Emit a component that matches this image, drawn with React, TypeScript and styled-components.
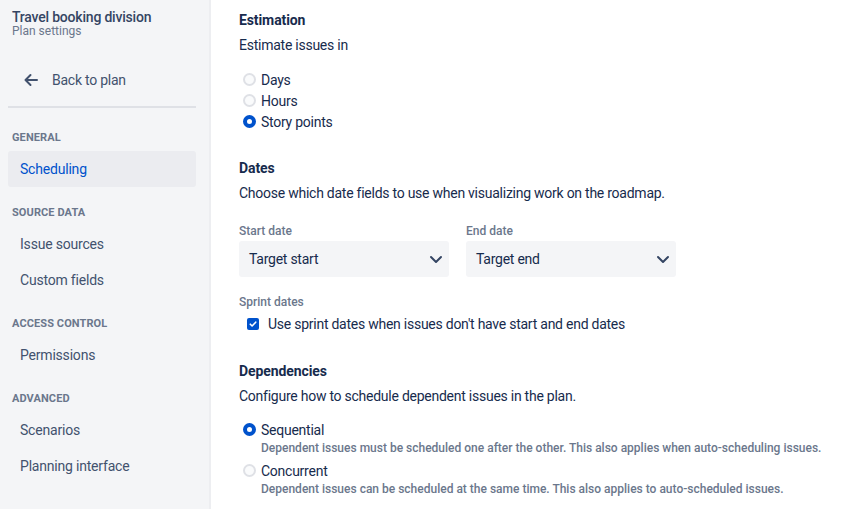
import * as React from "react";
import styled, { createGlobalStyle } from "styled-components";

const colors = {
	text: "#172B4D",
	subtle: "#6B778C",
	nav: "#42526E",
	blue: "#0052CC",
	sidebar: "#F4F5F7",
	selected: "#EBECF0",
	line: "#DFE1E6",
};

const Global = createGlobalStyle`
	html, body {
		margin: 0;
		padding: 0;
		background: #fff;
		font-family: Roboto, "Liberation Sans", sans-serif;
		color: ${colors.text};
		-webkit-font-smoothing: antialiased;
	}
`;

const Page = styled.div`
	display: flex;
	height: 509px;
	overflow: hidden;
`;

const Sidebar = styled.aside`
	width: 211px;
	flex-shrink: 0;
	box-sizing: border-box;
	background: ${colors.sidebar};
	border-right: 2px solid #EDEEF1;
	padding: 9px 13px 0 8px;
`;

const Title = styled.div`
	padding-left: 4px;
	font-size: 14px;
	line-height: 16px;
	font-weight: 500;
	letter-spacing: -0.2px;
	color: #344563;
`;

const Subtitle = styled.div`
	padding-left: 4px;
	font-size: 12px;
	line-height: 12px;
	color: ${colors.subtle};
`;

const BackRow = styled.div`
	display: flex;
	align-items: center;
	height: 40px;
	margin-top: 23px;
	padding-left: 15px;
	gap: 13px;
	font-size: 14px;
	letter-spacing: -0.25px;
	color: ${colors.nav};
	svg {
		display: block;
	}
`;

const Divider = styled.div`
	height: 2px;
	background: ${colors.line};
	margin-top: 6px;
`;

const Group = styled.div<{ $first?: boolean }>`
	margin-top: ${(p) => (p.$first ? "22px" : "18px")};
`;

const GroupHeader = styled.div`
	padding-left: 4px;
	font-size: 11px;
	line-height: 16px;
	font-weight: 700;
	text-transform: uppercase;
	letter-spacing: 0.1px;
	color: ${colors.subtle};
	margin-bottom: 5px;
`;

const NavItem = styled.div<{ $active?: boolean }>`
	height: 36px;
	display: flex;
	align-items: center;
	padding-left: 12px;
	border-radius: 3px;
	font-size: 14px;
	letter-spacing: -0.2px;
	color: ${(p) => (p.$active ? colors.blue : colors.nav)};
	background: ${(p) => (p.$active ? colors.selected : "transparent")};
`;

const Main = styled.main`
	flex: 1;
	padding: 10px 0 0 28px;
	letter-spacing: -0.25px;
`;

const Heading = styled.h3<{ $gap: number }>`
	margin: ${(p) => p.$gap}px 0 0;
	font-size: 14px;
	line-height: 20px;
	font-weight: 700;
	letter-spacing: -0.1px;
	color: ${colors.text};
`;

const Text = styled.p`
	margin: 5px 0 0;
	font-size: 14px;
	line-height: 20px;
	color: ${colors.text};
`;

const RadioList = styled.div<{ $gap: number }>`
	margin-top: ${(p) => p.$gap}px;
	display: flex;
	flex-direction: column;
`;

const RadioRow = styled.label`
	display: flex;
	align-items: center;
	height: 21px;
	gap: 5px;
	padding-left: 4px;
	font-size: 14px;
	color: ${colors.text};
`;

const RadioDot = styled.span<{ $checked?: boolean }>`
	width: 13px;
	height: 13px;
	border-radius: 50%;
	box-sizing: border-box;
	flex-shrink: 0;
	background: ${(p) => (p.$checked ? "#fff" : "#FAFBFC")};
	border: ${(p) => (p.$checked ? `4px solid ${colors.blue}` : `2px solid ${colors.line}`)};
`;

const Option = styled.div`
	display: flex;
	flex-direction: column;
	& + & {
		margin-top: 4px;
	}
`;

const RadioHint = styled.div`
	padding-left: 22px;
	font-size: 12px;
	line-height: 16px;
	font-weight: 500;
	letter-spacing: 0;
	color: ${colors.subtle};
	white-space: nowrap;
`;

const FieldRow = styled.div`
	display: flex;
	gap: 17px;
	margin-top: 20px;
`;

const Field = styled.div`
	width: 210px;
`;

const FieldLabel = styled.div<{ $gap?: number }>`
	font-size: 12px;
	line-height: 16px;
	font-weight: 500;
	letter-spacing: 0;
	color: ${colors.subtle};
	margin-top: ${(p) => p.$gap ?? 0}px;
`;

const Select = styled.div`
	margin-top: 2px;
	height: 36px;
	border-radius: 3px;
	background: ${colors.sidebar};
	display: flex;
	align-items: center;
	justify-content: space-between;
	padding: 0 3px 0 10px;
	font-size: 14px;
	color: ${colors.text};
	svg {
		display: block;
	}
`;

const CheckRow = styled.label`
	display: flex;
	align-items: center;
	height: 20px;
	margin-top: 4px;
	padding-left: 8px;
	gap: 9px;
	font-size: 14px;
	color: ${colors.text};
`;

const Box = styled.span`
	width: 12px;
	height: 12px;
	border-radius: 2px;
	background: ${colors.blue};
	display: flex;
	align-items: center;
	justify-content: center;
`;

const Arrow = () => (
	<svg width="16" height="16" viewBox="0 0 16 16" fill="none">
		<path d="M14 8H2.5M7.5 3L2.5 8l5 5" stroke={colors.nav} strokeWidth="2" strokeLinecap="round" strokeLinejoin="round" />
	</svg>
);

const Chevron = () => (
	<svg width="20" height="20" viewBox="0 0 20 20" fill="none">
		<path d="M5 8l5 5 5-5" stroke="#344563" strokeWidth="2" strokeLinecap="round" strokeLinejoin="round" />
	</svg>
);

const Check = () => (
	<svg width="10" height="10" viewBox="0 0 10 10" fill="none">
		<path d="M2.3 5.2l1.8 1.8 3.6-3.8" stroke="#fff" strokeWidth="1.6" strokeLinecap="round" strokeLinejoin="round" />
	</svg>
);

const nav = [
	{ title: "General", items: ["Scheduling"] },
	{ title: "Source data", items: ["Issue sources", "Custom fields"] },
	{ title: "Access control", items: ["Permissions"] },
	{ title: "Advanced", items: ["Scenarios", "Planning interface"] },
];

export default function App() {
	return (
		<Page>
			<Global />
			<Sidebar>
				<Title>Travel booking division</Title>
				<Subtitle>Plan settings</Subtitle>
				<BackRow>
					<Arrow />
					Back to plan
				</BackRow>
				<Divider />
				{nav.map((group, i) => (
					<Group key={group.title} $first={i === 0}>
						<GroupHeader>{group.title}</GroupHeader>
						{group.items.map((item) => (
							<NavItem key={item} $active={item === "Scheduling"}>
								{item}
							</NavItem>
						))}
					</Group>
				))}
			</Sidebar>
			<Main>
				<Heading $gap={0}>Estimation</Heading>
				<Text>Estimate issues in</Text>
				<RadioList $gap={14}>
					<RadioRow><RadioDot />Days</RadioRow>
					<RadioRow><RadioDot />Hours</RadioRow>
					<RadioRow><RadioDot $checked />Story points</RadioRow>
				</RadioList>

				<Heading $gap={26}>Dates</Heading>
				<Text>Choose which date fields to use when visualizing work on the roadmap.</Text>
				<FieldRow>
					<Field>
						<FieldLabel>Start date</FieldLabel>
						<Select>Target start<Chevron /></Select>
					</Field>
					<Field>
						<FieldLabel>End date</FieldLabel>
						<Select>Target end<Chevron /></Select>
					</Field>
				</FieldRow>
				<FieldLabel $gap={17}>Sprint dates</FieldLabel>
				<CheckRow>
					<Box><Check /></Box>
					Use sprint dates when issues don't have start and end dates
				</CheckRow>

				<Heading $gap={27}>Dependencies</Heading>
				<Text>Configure how to schedule dependent issues in the plan.</Text>
				<RadioList $gap={13}>
					<Option>
						<RadioRow><RadioDot $checked />Sequential</RadioRow>
						<RadioHint>Dependent issues must be scheduled one after the other. This also applies when auto-scheduling issues.</RadioHint>
					</Option>
					<Option>
						<RadioRow><RadioDot />Concurrent</RadioRow>
						<RadioHint>Dependent issues can be scheduled at the same time. This also applies to auto-scheduled issues.</RadioHint>
					</Option>
				</RadioList>
			</Main>
		</Page>
	);
}
